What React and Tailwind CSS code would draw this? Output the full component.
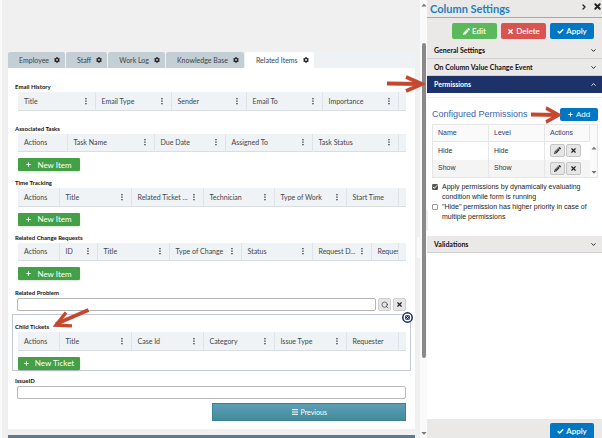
import { useState } from 'react'
import { Check, ChevronDown, ChevronRight, ChevronUp, Menu, Search, X } from 'lucide-react'
import { FaCog, FaPlus, FaCaretDown, FaCaretUp, FaPencilAlt } from 'react-icons/fa'

const tabs = ['Employee', 'Staff', 'Work Log', 'Knowledge Base', 'Related Items']

const emailColumns = [
  { name: 'Title', width: 'w-[77px]', menu: true },
  { name: 'Email Type', width: 'w-[76px]', menu: true },
  { name: 'Sender', width: 'w-[75px]', menu: true },
  { name: 'Email To', width: 'w-[76px]', menu: true },
  { name: 'Importance', width: 'w-[76px]', menu: true },
]

const taskColumns = [
  { name: 'Actions', width: 'w-[49px]' },
  { name: 'Task Name', width: 'w-[87px]', menu: true },
  { name: 'Due Date', width: 'w-[71px]', menu: true },
  { name: 'Assigned To', width: 'w-[87px]', menu: true },
  { name: 'Task Status', width: 'w-[86px]', menu: true },
]

const timeColumns = [
  { name: 'Actions', width: 'w-[41px]' },
  { name: 'Title', width: 'w-[72px]', menu: true },
  { name: 'Related Ticket ...', width: 'w-[72px]', menu: true },
  { name: 'Technician', width: 'w-[71px]', menu: true },
  { name: 'Type of Work', width: 'w-[72px]', menu: true },
  { name: 'Start Time', width: 'w-[52px]' },
]

const changeColumns = [
  { name: 'Actions', width: 'w-[41px]' },
  { name: 'ID', width: 'w-[38px]', menu: true },
  { name: 'Title', width: 'w-[72px]', menu: true },
  { name: 'Type of Change', width: 'w-[72px]', menu: true },
  { name: 'Status', width: 'w-[71px]', menu: true },
  { name: 'Request D...', width: 'w-[59px]', menu: true },
  { name: 'Reques', width: 'w-[27px]' },
]

const ticketColumns = [
  { name: 'Actions', width: 'w-[41px]' },
  { name: 'Title', width: 'w-[72px]', menu: true },
  { name: 'Case Id', width: 'w-[72px]', menu: true },
  { name: 'Category', width: 'w-[71px]', menu: true },
  { name: 'Issue Type', width: 'w-[72px]', menu: true },
  { name: 'Requester', width: 'w-[52px]' },
]

const permissions = [
  { name: 'Hide', level: 'Hide' },
  { name: 'Show', level: 'Show' },
]

function Arrow({ className }) {
  return (
    <svg viewBox="0 0 38 18" preserveAspectRatio="none" fill="none" stroke="#c5472f" className={className}>
      <path d="M0 8.5 L34 9" strokeWidth="3.8" />
      <path d="M19 2 L35 9 L19 16" strokeWidth="3.6" />
    </svg>
  )
}

function MenuDots() {
  return (
    <svg viewBox="0 0 2 8" fill="#333" className="mr-0.5 h-2 w-0.5 shrink-0">
      <rect x="0.3" y="1" width="1.300" height="1.300" />
      <rect x="0.3" y="3.500" width="1.300" height="1.300" />
      <rect x="0.3" y="6" width="1.300" height="1.300" />
    </svg>
  )
}

function Grid({ label, columns }) {
  return (
    <table aria-label={label} className="w-full table-fixed border-collapse bg-[#eff3f6] text-left">
      <thead>
        <tr className="h-[18px] border-b border-[#d9dee2]">
          {columns.map((column) => (
            <th key={column.name} className={`${column.width} border-r border-[#dfe4e8] p-0 font-normal`}>
              <div className={`flex items-center justify-between overflow-hidden pl-1.5 ${column.menu ? 'pr-1.5' : ''}`}>
                <span className="whitespace-nowrap text-[7px] leading-[10px] text-[#404548]">{column.name}</span>
                {column.menu && <MenuDots />}
              </div>
            </th>
          ))}
          <td className="p-0" />
        </tr>
      </thead>
    </table>
  )
}

function Section({ title, columns, button }) {
  return (
    <section>
      <h2 className="text-[6px] font-bold leading-[10px] text-[#111]">{title}</h2>
      <div className="pl-[3px]">
        <Grid label={title} columns={columns} />
        {button && (
          <button className="mt-1.5 flex h-[13px] w-[62px] items-center justify-center gap-1.5 rounded-[1px] bg-[#43a047] text-[8px] leading-[10px] text-white shadow-sm">
            <FaPlus className="h-[5px] w-[5px]" />
            {button}
          </button>
        )}
      </div>
    </section>
  )
}

function FormPage() {
  const [active, setActive] = useState('Related Items')

  return (
    <main className="min-w-0 flex-1 border-l-2 border-[#fafafa] bg-[#f0f0f0] pl-1.5 pr-[5px] pt-[52px]">
      <div className="rounded-t-xs bg-[#eef2f5]">
        <nav className="flex h-4 gap-px">
          {tabs.map((tab) => (
            <button
              key={tab}
              onClick={() => setActive(tab)}
              className={`flex items-center gap-[5px] rounded-t-xs pl-[11px] pr-[5px] text-[7px] leading-[10px] text-[#404548] ${
                tab === active ? 'bg-white' : 'bg-[#c3ced5]'
              }`}
            >
              {tab}
              <FaCog className="h-1.5 w-1.5 text-[#222]" />
            </button>
          ))}
        </nav>
      </div>

      <div className="bg-white pb-2 pl-[7px] pr-[9px] pt-[14px]">
        <Section title="Email History" columns={emailColumns} />
        <div className="mt-[13px] flex flex-col gap-[7px]">
          <Section title="Associated Tasks" columns={taskColumns} button="New Item" />
          <Section title="Time Tracking" columns={timeColumns} button="New Item" />
          <Section title="Related Change Requests" columns={changeColumns} button="New Item" />
          <div className="pt-px">
            <label htmlFor="problem" className="block text-[6px] font-bold leading-[10px] text-[#111]">
              Related Problem
            </label>
            <div className="flex gap-0.5 pl-0.5">
              <input id="problem" className="h-[13px] min-w-0 flex-1 rounded-xs border border-[#b5b5b5] bg-white px-1 text-[7px]" />
              <button aria-label="Search" className="flex h-[13px] w-[13px] items-center justify-center rounded-xs border border-[#d0d0d0] bg-[#e6e6e6]">
                <Search className="h-2 w-2 text-[#333]" />
              </button>
              <button aria-label="Clear" className="flex h-[13px] w-[13px] items-center justify-center rounded-xs border border-[#d0d0d0] bg-[#e6e6e6]">
                <X className="h-[7px] w-[7px] text-[#222]" strokeWidth={4} />
              </button>
            </div>
          </div>
        </div>

        <div className="relative -ml-[3px] -mr-[5px] mt-[3px] border border-[#c3c9d9] pl-[2px] pr-1 pt-[7px]">
          <Section title="Child Tickets" columns={ticketColumns} button="New Ticket" />
          <button aria-label="Remove" className="absolute -right-[3px] -top-[3px] h-[11px] w-[11px]">
            <svg viewBox="0 0 11 11" className="h-[11px] w-[11px]">
              <circle cx="5.5" cy="5.5" r="4.700" fill="#fff" stroke="#14296b" strokeWidth="1.500" />
              <rect x="3.2" y="3.2" width="4.6" height="4.6" rx="1" fill="#14296b" />
              <path d="M4.300 4.300 L6.700 6.700 M6.700 4.300 L4.300 6.700" stroke="#fff" strokeWidth="0.8" />
            </svg>
          </button>
          <svg viewBox="0 0 38 20" fill="none" stroke="#c5472f" className="absolute -top-[7px] left-[39px] h-5 w-[38px]">
            <path d="M36.500 2 L4 16" strokeWidth="3.8" />
            <path d="M14 4.500 L4 17.300 L20 17.900" strokeWidth="3.400" />
          </svg>
        </div>

        <div className="mt-[5px]">
          <label htmlFor="issue" className="block text-[6px] font-bold leading-[10px] text-[#111]">
            IssueID
          </label>
          <div className="pl-0.5">
            <input id="issue" className="block h-[13px] w-full rounded-xs border border-[#b8b8b8] bg-white px-1 text-[7px]" />
            <button className="ml-auto mt-1 flex h-[18px] w-1/2 items-center justify-center gap-0.5 border border-[#3b8296] bg-linear-to-b from-[#5b9fb5] to-[#428c99] text-[7px] leading-[10px] text-white">
              <Menu className="h-2 w-2" strokeWidth={3} />
              Previous
            </button>
          </div>
        </div>
      </div>
      <div className="mt-1.5 h-[3px] bg-[#5f7b8b]" />
    </main>
  )
}

function ScrollTrack() {
  return (
    <div className="relative flex w-[7px] shrink-0 flex-col items-center bg-[#fafafa]">
      <FaCaretUp className="mt-px h-2 w-2 shrink-0 text-[#777]" />
      <div className="mt-[34px] h-[72%] w-1 rounded-full bg-[#898989]" />
      <FaCaretDown className="mb-px mt-auto h-2 w-2 shrink-0 text-[#777]" />
      <div className="absolute -left-[3px] top-[54%] h-[21px] w-[3px] bg-[#fafafa]" />
      <div className="absolute -right-px top-[48%] h-[21px] w-0.5 bg-[#eee]" />
    </div>
  )
}

function AccordionHeader({ title, open }) {
  const Icon = open ? ChevronUp : ChevronDown
  return (
    <button
      aria-expanded={open}
      className={`flex h-[17px] w-full items-center justify-between border-b px-[7px] text-[7px] font-bold leading-[10px] ${
        open ? 'border-[#1c3268] bg-[#1c3268] text-white' : 'border-[#d2d0d0] bg-[#ebe8e8] text-[#111]'
      }`}
    >
      {title}
      <Icon className="-mr-0.5 h-[7px] w-[7px]" strokeWidth={3} />
    </button>
  )
}

function ApplyButton() {
  return (
    <button className="flex h-4 w-11 items-center justify-center gap-0.5 rounded-xs bg-[#0077c5] text-[8px] font-semibold leading-[10px] text-white">
      <Check className="h-[7px] w-[7px]" strokeWidth={5} />
      Apply
    </button>
  )
}

function Option({ children, ...props }) {
  return (
    <label className="flex items-start gap-1">
      <span className="relative mt-0.5 h-1.5 w-1.5 shrink-0">
        <input
          type="checkbox"
          className="peer block h-1.5 w-1.5 appearance-none rounded-[1px] border border-[#999] bg-white checked:border-[#555] checked:bg-[#555]"
          {...props}
        />
        <Check className="absolute inset-0 hidden h-1.5 w-1.5 text-white peer-checked:block" strokeWidth={4} />
      </span>
      <span>{children}</span>
    </label>
  )
}

function SettingsPanel() {
  return (
    <aside className="flex w-[175px] shrink-0 flex-col bg-white">
      <div className="bg-[#ebe8e8]">
        <header className="flex h-[18px] items-center border-b border-[#7cb3da] pl-[3px]">
          <h1 className="flex-1 whitespace-nowrap text-[11px] font-bold leading-[14px] text-[#1c7fc2]">Column Settings</h1>
          <button aria-label="Collapse" className="mb-1 mr-[5px]">
            <ChevronRight className="h-2 w-2 text-[#222]" strokeWidth={4} />
          </button>
          <button aria-label="Close" className="mb-1">
            <X className="h-[9px] w-[9px] text-[#222]" strokeWidth={5} />
          </button>
        </header>
        <div className="flex justify-end gap-1 pb-[3px] pr-2 pt-[5px]">
          <button className="flex h-4 w-[45px] items-center justify-center gap-0.5 rounded-xs bg-[#5cb85c] text-[8px] font-semibold leading-[10px] text-white">
            <FaPencilAlt className="h-[7px] w-[7px]" />
            Edit
          </button>
          <button className="flex h-4 w-[45px] items-center justify-center gap-0.5 rounded-xs bg-[#d9534f] text-[8px] font-semibold leading-[10px] text-white">
            <X className="h-[7px] w-[7px]" strokeWidth={5} />
            Delete
          </button>
          <ApplyButton />
        </div>
      </div>

      <AccordionHeader title="General Settings" />
      <AccordionHeader title="On Column Value Change Event" />
      <div className="relative">
        <AccordionHeader title="Permissions" open />
        <Arrow className="absolute -left-10 -top-px h-[18px] w-[38px]" />
      </div>

      <div className="mt-[4px] border-t border-[#eee] pl-[5px] pr-1 pt-[10px] font-['Liberation_Sans',sans-serif]">
        <div className="relative flex items-center justify-between">
          <h2 className="whitespace-nowrap text-[9px] leading-[13px] text-[#3a62b4]">Configured Permissions</h2>
          <button className="flex h-[13px] w-[38px] items-center justify-center gap-[3px] rounded-xs bg-[#0077c5] text-[8px] leading-[10px] text-white">
            <FaPlus className="h-[5px] w-[5px]" />
            Add
          </button>
          <Arrow className="absolute -top-0.5 right-[37px] h-[18px] w-[30px]" />
        </div>

        <div className="relative mt-[3px]">
          <table className="w-full table-fixed border-collapse border border-[#e6e6e6] text-left text-[7px] leading-[10px] text-[#333]">
            <thead>
              <tr className="h-[17px] bg-[#fafafa] text-[#2c3d78]">
                <th className="border border-[#e6e6e6] py-0 pl-[5px] font-normal">Name</th>
                <th className="border border-[#e6e6e6] py-0 pl-[5px] font-normal">Level</th>
                <th className="w-[45px] border border-[#e6e6e6] py-0 pl-[5px] font-normal">Actions</th>
                <td className="w-2 p-0" />
              </tr>
            </thead>
            <tbody>
              {permissions.map((permission) => (
                <tr key={permission.name} className="h-[18px] even:bg-[#f4f4f4]">
                  <td className="border-r border-[#e6e6e6] py-0 pl-[5px]">{permission.name}</td>
                  <td className="border-r border-[#e6e6e6] py-0 pl-[5px]">{permission.level}</td>
                  <td className="py-0 pl-[5px]">
                    <div className="flex gap-px">
                      <button aria-label={`Edit ${permission.name}`} className="flex h-[13px] w-[15px] items-center justify-center rounded-xs border border-[#c4c4c4] bg-[#e6e6e6]">
                        <FaPencilAlt className="h-[7px] w-[7px] text-[#333]" />
                      </button>
                      <button aria-label={`Remove ${permission.name}`} className="flex h-[13px] w-[15px] items-center justify-center rounded-xs border border-[#c4c4c4] bg-[#e6e6e6]">
                        <X className="h-[7px] w-[7px] text-[#222]" strokeWidth={4} />
                      </button>
                    </div>
                  </td>
                  <td className="bg-[#fafafa] p-0" />
                </tr>
              ))}
            </tbody>
          </table>
          <div className="absolute bottom-0.5 right-0 flex h-8 w-2 flex-col items-center justify-between text-[#777]">
            <FaCaretUp className="h-2 w-2" />
            <FaCaretDown className="h-2 w-2" />
          </div>
        </div>

        <div className="mt-1 text-[7px] leading-[10px] text-[#222]">
          <Option defaultChecked>Apply permissions by dynamically evaluating condition while form is running</Option>
          <Option>&quot;Hide&quot; permission has higher priority in case of multiple permissions</Option>
        </div>
      </div>

      <div className="mt-[14px]">
        <AccordionHeader title="Validations" />
      </div>

      <footer className="mt-auto flex h-[19px] shrink-0 items-start justify-end overflow-hidden bg-[#ebe8e8] pr-2 pt-1">
        <ApplyButton />
      </footer>
    </aside>
  )
}

export default function App() {
  return (
    <div className="flex min-h-screen bg-[#f0f0f0] font-['Lato','Open_Sans',sans-serif]">
      <FormPage />
      <ScrollTrack />
      <SettingsPanel />
    </div>
  )
}
